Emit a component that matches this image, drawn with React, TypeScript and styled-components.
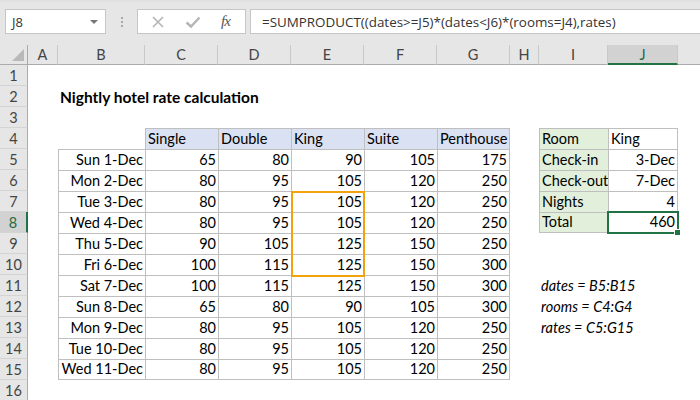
import React from "react";
import styled, { createGlobalStyle } from "styled-components";

const GlobalStyle = createGlobalStyle`
  html, body {
    margin: 0;
    padding: 0;
    background: #ffffff;
    overflow: hidden;
  }
`;

type Align = "left" | "right" | "center";

interface CellData {
  v?: string;
  align?: Align;
  bold?: boolean;
  italic?: boolean;
  bg?: string;
  boxed?: boolean;
}

// row header, A..J, then the partly visible column K
const COL_WIDTHS = [28, 30, 87, 73, 73, 73, 73, 73, 29, 69, 70, 70];
const LETTERS = ["A", "B", "C", "D", "E", "F", "G", "H", "I", "J"];
const ROW_COUNT = 16;
const SELECTED_COL = "J";
const SELECTED_ROW = 8;

const rates: [string, number[]][] = [
  ["Sun 1-Dec", [65, 80, 90, 105, 175]],
  ["Mon 2-Dec", [80, 95, 105, 120, 250]],
  ["Tue 3-Dec", [80, 95, 105, 120, 250]],
  ["Wed 4-Dec", [80, 95, 105, 120, 250]],
  ["Thu 5-Dec", [90, 105, 125, 150, 250]],
  ["Fri 6-Dec", [100, 115, 125, 150, 300]],
  ["Sat 7-Dec", [100, 115, 125, 150, 300]],
  ["Sun 8-Dec", [65, 80, 90, 105, 300]],
  ["Mon 9-Dec", [80, 95, 105, 120, 250]],
  ["Tue 10-Dec", [80, 95, 105, 120, 250]],
  ["Wed 11-Dec", [80, 95, 105, 120, 250]],
];

const rooms = ["Single", "Double", "King", "Suite", "Penthouse"];

const summary: [string, string, Align][] = [
  ["Room", "King", "left"],
  ["Check-in", "3-Dec", "right"],
  ["Check-out", "7-Dec", "right"],
  ["Nights", "4", "right"],
  ["Total", "460", "right"],
];

// build the sheet as a map of "B5" -> cell
const cells: Record<string, CellData> = {};
cells["B2"] = { v: "Nightly hotel rate calculation", bold: true };
rooms.forEach((r, i) => {
  cells[`${LETTERS[2 + i]}4`] = { v: r, bg: "#d9e1f2", boxed: true };
});
rates.forEach(([day, vals], i) => {
  const row = 5 + i;
  cells[`B${row}`] = { v: day, align: "right", boxed: true };
  vals.forEach((n, j) => {
    cells[`${LETTERS[2 + j]}${row}`] = {
      v: String(n),
      align: "right",
      boxed: true,
    };
  });
});
summary.forEach(([label, value, align], i) => {
  cells[`I${4 + i}`] = { v: label, bg: "#e2efda", boxed: true };
  cells[`J${4 + i}`] = { v: value, align, boxed: true };
});
cells["I11"] = { v: "dates = B5:B15", italic: true };
cells["I12"] = { v: "rooms = C4:G4", italic: true };
cells["I13"] = { v: "rates = C5:G15", italic: true };

const isBoxed = (col: number, row: number) =>
  col >= 0 && col < LETTERS.length && !!cells[`${LETTERS[col]}${row}`]?.boxed;

export default function App() {
  return (
    <>
      <GlobalStyle />
      <Window>
        <Toolbar>
          <NameBox>
            J8
            <Caret />
          </NameBox>
          <Grip>
            <span />
            <span />
            <span />
          </Grip>
          <FxBox>
            <svg width="14" height="14" viewBox="0 0 14 14">
              <path
                d="M2 2 L12 12 M12 2 L2 12"
                stroke="#b5b5b5"
                strokeWidth="1.6"
                fill="none"
              />
            </svg>
            <svg width="16" height="14" viewBox="0 0 16 14">
              <path
                d="M1.5 7.5 L6 11.5 L14.5 2.5"
                stroke="#b5b5b5"
                strokeWidth="2.4"
                fill="none"
              />
            </svg>
            <FxLabel>fx</FxLabel>
          </FxBox>
          <FormulaBox>
            =SUMPRODUCT((dates&gt;=J5)*(dates&lt;J6)*(rooms=J4),rates)
          </FormulaBox>
        </Toolbar>

        <Sheet>
          <Corner $col={1} $row={1}>
            <CornerMark />
          </Corner>
          {LETTERS.map((l, c) => (
            <ColHead
              key={l}
              $col={c + 2}
              $row={1}
              $active={l === SELECTED_COL}
            >
              {l}
            </ColHead>
          ))}
          <ColHead $col={LETTERS.length + 2} $row={1} />

          {Array.from({ length: ROW_COUNT }, (_, i) => {
            const row = i + 1;
            return (
              <React.Fragment key={row}>
                <RowHead $col={1} $row={row + 1} $active={row === SELECTED_ROW}>
                  {row}
                </RowHead>
                {LETTERS.map((l, c) => {
                  const cell = cells[`${l}${row}`] || {};
                  const boxed = !!cell.boxed;
                  return (
                    <Cell
                      key={l}
                      $col={c + 2}
                      $row={row + 1}
                      $align={cell.align || "left"}
                      $bold={cell.bold}
                      $italic={cell.italic}
                      $bg={cell.bg}
                      $bl={boxed}
                      $bt={boxed}
                      $br={boxed && !isBoxed(c + 1, row)}
                      $bb={boxed && !isBoxed(c, row + 1)}
                    >
                      {cell.v}
                    </Cell>
                  );
                })}
              </React.Fragment>
            );
          })}

          <RangeMark />
          <ActiveCell />
        </Sheet>
      </Window>
    </>
  );
}

const Window = styled.div`
  width: 700px;
  height: 400px;
  overflow: hidden;
  background: #ffffff;
  font-family: Lato, "Liberation Sans", sans-serif;
`;

const Toolbar = styled.div`
  height: 45px;
  box-sizing: border-box;
  background: linear-gradient(#dedede 0, #e6e6e6 3px, #e6e6e6 100%);
  display: flex;
  align-items: flex-start;
  padding: 9px 0 0 5px;
`;

const NameBox = styled.div`
  position: relative;
  width: 101px;
  height: 25px;
  box-sizing: border-box;
  background: #ffffff;
  border: 1px solid #c6c6c6;
  display: flex;
  align-items: center;
  padding-left: 6px;
  font-family: "Open Sans", "Noto Sans", sans-serif;
  font-size: 13px;
  color: #333333;
`;

const Caret = styled.div`
  position: absolute;
  right: 7px;
  top: 10px;
  width: 0;
  height: 0;
  border-left: 4px solid transparent;
  border-right: 4px solid transparent;
  border-top: 4px solid #777777;
`;

const Grip = styled.div`
  width: 31px;
  height: 25px;
  display: flex;
  flex-direction: column;
  align-items: center;
  justify-content: center;
  gap: 2px;

  span {
    display: block;
    width: 2px;
    height: 2px;
    background: #a8a8a8;
  }
`;

const FxBox = styled.div`
  width: 109px;
  height: 25px;
  box-sizing: border-box;
  background: #ffffff;
  border: 1px solid #c6c6c6;
  display: flex;
  align-items: center;
  gap: 20px;
  padding-left: 13px;
`;

const FxLabel = styled.span`
  font-family: "Liberation Serif", serif;
  font-style: italic;
  font-size: 15px;
  color: #555555;
  letter-spacing: -1px;
`;

const FormulaBox = styled.div`
  flex: 1;
  margin-left: 4px;
  height: 25px;
  box-sizing: border-box;
  background: #ffffff;
  border: 1px solid #c6c6c6;
  border-right: none;
  display: flex;
  align-items: center;
  padding-left: 11px;
  font-family: "Open Sans", "Noto Sans", sans-serif;
  font-size: 13.4px;
  color: #333333;
  white-space: nowrap;
`;

const Sheet = styled.div`
  display: grid;
  grid-template-columns: ${COL_WIDTHS.map((w) => `${w}px`).join(" ")};
  grid-template-rows: 20px repeat(${ROW_COUNT}, 21px);
  background: #ffffff;
`;

const HeadBase = styled.div<{ $col: number; $row: number }>`
  grid-column: ${({ $col }) => $col};
  grid-row: ${({ $row }) => $row};
  box-sizing: border-box;
  background: #e6e6e6;
  display: flex;
  align-items: center;
  justify-content: center;
  font-size: 14.5px;
  color: #444444;
`;

const Corner = styled(HeadBase)`
  border-right: 1px solid #ababab;
  border-bottom: 1px solid #ababab;
  justify-content: flex-end;
  align-items: flex-end;
  padding: 0 3px 3px 0;
`;

const CornerMark = styled.div`
  width: 0;
  height: 0;
  border-left: 12px solid transparent;
  border-bottom: 12px solid #b9b9b9;
`;

const ColHead = styled(HeadBase)<{ $active?: boolean }>`
  border-right: 1px solid #c9c9c9;
  border-bottom: ${({ $active }) =>
    $active ? "2px solid #217346" : "1px solid #ababab"};
  background: ${({ $active }) => ($active ? "#d2d2d2" : "#e6e6e6")};
  color: ${({ $active }) => ($active ? "#1e6b41" : "#444444")};
  padding-top: ${({ $active }) => ($active ? "1px" : "0")};
`;

const RowHead = styled(HeadBase)<{ $active?: boolean }>`
  border-bottom: 1px solid #d4d4d4;
  border-right: ${({ $active }) =>
    $active ? "2px solid #217346" : "1px solid #ababab"};
  background: ${({ $active }) => ($active ? "#d2d2d2" : "#e6e6e6")};
  color: ${({ $active }) => ($active ? "#1e6b41" : "#444444")};
  padding-top: 1px;
`;

const GRID_LINE = "1px solid #bfbfbf";

const Cell = styled.div<{
  $col: number;
  $row: number;
  $align: Align;
  $bold?: boolean;
  $italic?: boolean;
  $bg?: string;
  $bl?: boolean;
  $bt?: boolean;
  $br?: boolean;
  $bb?: boolean;
}>`
  grid-column: ${({ $col }) => $col};
  grid-row: ${({ $row }) => $row};
  box-sizing: border-box;
  min-width: 0;
  display: flex;
  align-items: flex-end;
  justify-content: ${({ $align }) =>
    $align === "right" ? "flex-end" : $align === "center" ? "center" : "flex-start"};
  padding: 0 2px 1px 2px;
  white-space: nowrap;
  overflow: visible;
  font-size: ${({ $bold }) => ($bold ? "15.5px" : "14.5px")};
  line-height: 18px;
  color: #000000;
  font-weight: ${({ $bold }) => ($bold ? 700 : 400)};
  font-style: ${({ $italic }) => ($italic ? "italic" : "normal")};
  background: ${({ $bg }) => $bg || "transparent"};
  border-left: ${({ $bl }) => ($bl ? GRID_LINE : "none")};
  border-top: ${({ $bt }) => ($bt ? GRID_LINE : "none")};
  border-right: ${({ $br }) => ($br ? GRID_LINE : "none")};
  border-bottom: ${({ $bb }) => ($bb ? GRID_LINE : "none")};
`;

// orange marker around E7:E10
const RangeMark = styled.div`
  grid-column: 6;
  grid-row: 8 / 12;
  border: 2px solid #f2a20c;
  margin: 0 -1px -2px 0;
  pointer-events: none;
`;

// selected cell J8 with its fill handle
const ActiveCell = styled.div`
  grid-column: 11;
  grid-row: ${SELECTED_ROW + 1};
  position: relative;
  border: 2px solid #217346;
  margin: -1px -1px -1px -1px;
  pointer-events: none;

  &::after {
    content: "";
    position: absolute;
    right: -4px;
    bottom: -4px;
    width: 5px;
    height: 5px;
    background: #217346;
    border: 1px solid #ffffff;
  }
`;
